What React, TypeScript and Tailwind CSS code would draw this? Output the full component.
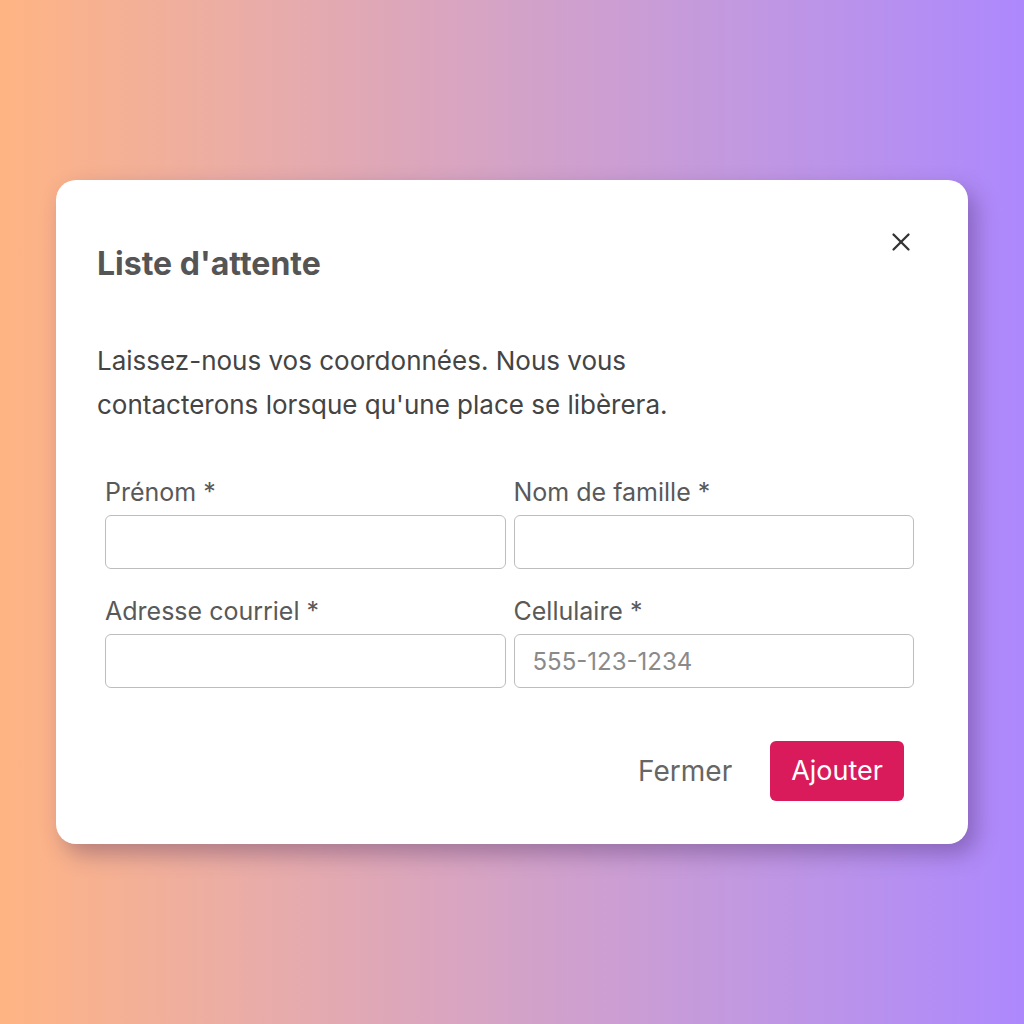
import { X } from 'lucide-react';

const labelCls = 'block text-[25px] leading-[30px] text-[#595959] mb-[8px]';
const inputCls =
  'w-full h-[54px] rounded-[6px] border border-[#bdbdbd] bg-white px-[18px] text-[24px] text-[#444] placeholder:text-[#8a8a8a] outline-none';

function Field({ label, placeholder }: { label: string; placeholder?: string }) {
  return (
    <div>
      <label className={labelCls}>{label}</label>
      <input className={inputCls} placeholder={placeholder} />
    </div>
  );
}

function App() {
  return (
    <div
      className="min-h-screen w-full flex items-center justify-center bg-gradient-to-r from-[#ffb482] to-[#ad88fd]"
      style={{ fontFamily: 'Inter, "Noto Sans", sans-serif' }}
    >
      <div className="relative w-[912px] h-[664px] rounded-[20px] bg-white shadow-[8px_10px_22px_rgba(60,30,80,0.35)]">
        <button className="absolute top-[47px] right-[52px] text-[#333]">
          <X size={30} strokeWidth={1.8} />
        </button>

        <div className="pl-[41px] pr-[54px] pt-[64px]">
          <h2 className="text-[32px] leading-[40px] font-bold text-[#555]">Liste d'attente</h2>

          <p className="mt-[55px] text-[26px] leading-[44px] text-[#444]">
            Laissez-nous vos coordonnées. Nous vous
            <br />
            contacterons lorsque qu'une place se libèrera.
          </p>
        </div>

        <div className="ml-[49px] mr-[54px] mt-[50px] grid grid-cols-2 gap-x-[8px] gap-y-[27px]">
          <Field label="Prénom *" />
          <Field label="Nom de famille *" />
          <Field label="Adresse courriel *" />
          <Field label="Cellulaire *" placeholder="555-123-1234" />
        </div>

        <div className="mr-[64px] mt-[53px] flex items-center justify-end gap-[38px]">
          <button className="text-[28px] text-[#666]">Fermer</button>
          <button className="h-[60px] px-[21px] rounded-[6px] bg-[#d91b5c] text-[27px] text-white">
            Ajouter
          </button>
        </div>
      </div>
    </div>
  );
}

export default App;
